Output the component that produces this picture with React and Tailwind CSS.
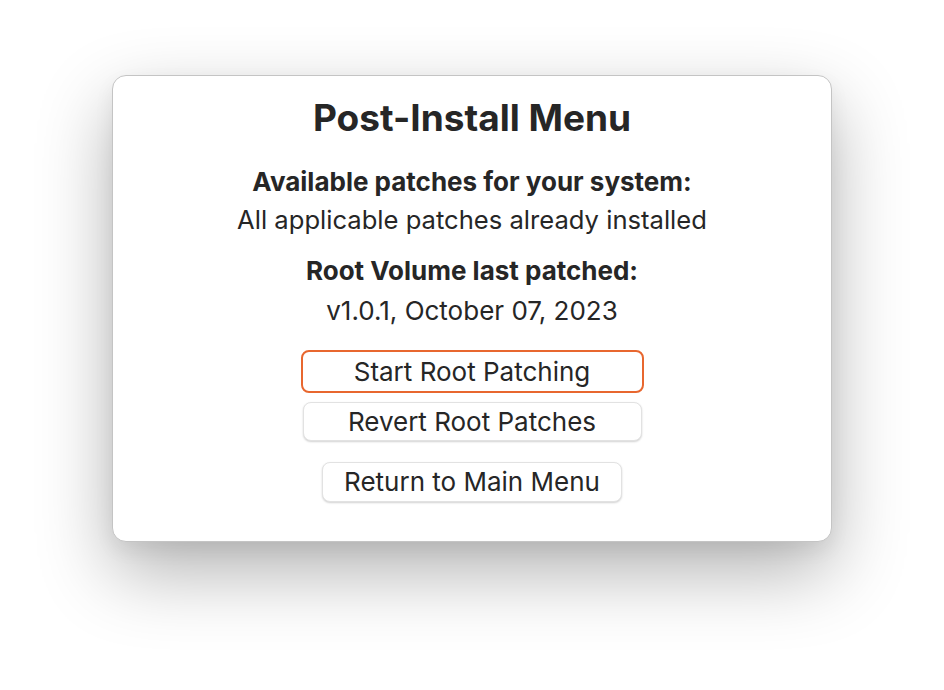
import React from 'react';

const Button = ({ children, primary, className = '' }) => (
  <button
    className={`flex items-center justify-center rounded-[8px] bg-white text-[26px] leading-[30px] text-[#262626] ${
      primary
        ? 'border-2 border-[#e8672f]'
        : 'border border-[#e2e2e2] shadow-[0_1px_2px_rgba(0,0,0,0.18)]'
    } ${className}`}
  >
    {children}
  </button>
);

export default function App() {
  return (
    <div className="w-[944px] h-[690px] bg-white pt-[75px] pl-[112px] font-['Inter','Noto_Sans',sans-serif]">
      <div className="w-[720px] h-[467px] rounded-[14px] bg-white border border-[#c4c4c4] shadow-[0_30px_75px_rgba(0,0,0,0.3),0_8px_20px_rgba(0,0,0,0.06)] flex flex-col items-center text-[#262626]">
        <h1 className="mt-[20px] text-[37px] font-bold leading-[44px]">Post-Install Menu</h1>
        <p className="mt-[27px] text-[26px] font-bold leading-[30px]">Available patches for your system:</p>
        <p className="mt-[8px] text-[25.6px] leading-[30px]">All applicable patches already installed</p>
        <p className="mt-[21px] text-[26px] font-bold leading-[30px]">Root Volume last patched:</p>
        <p className="mt-[10px] text-[26px] leading-[30px]">v1.0.1, October 07, 2023</p>
        <Button primary className="mt-[24px] w-[343px] h-[43px]">Start Root Patching</Button>
        <Button className="mt-[9px] w-[339px] h-[39px]">Revert Root Patches</Button>
        <Button className="mt-[21px] w-[300px] h-[40px]">Return to Main Menu</Button>
      </div>
    </div>
  );
}
